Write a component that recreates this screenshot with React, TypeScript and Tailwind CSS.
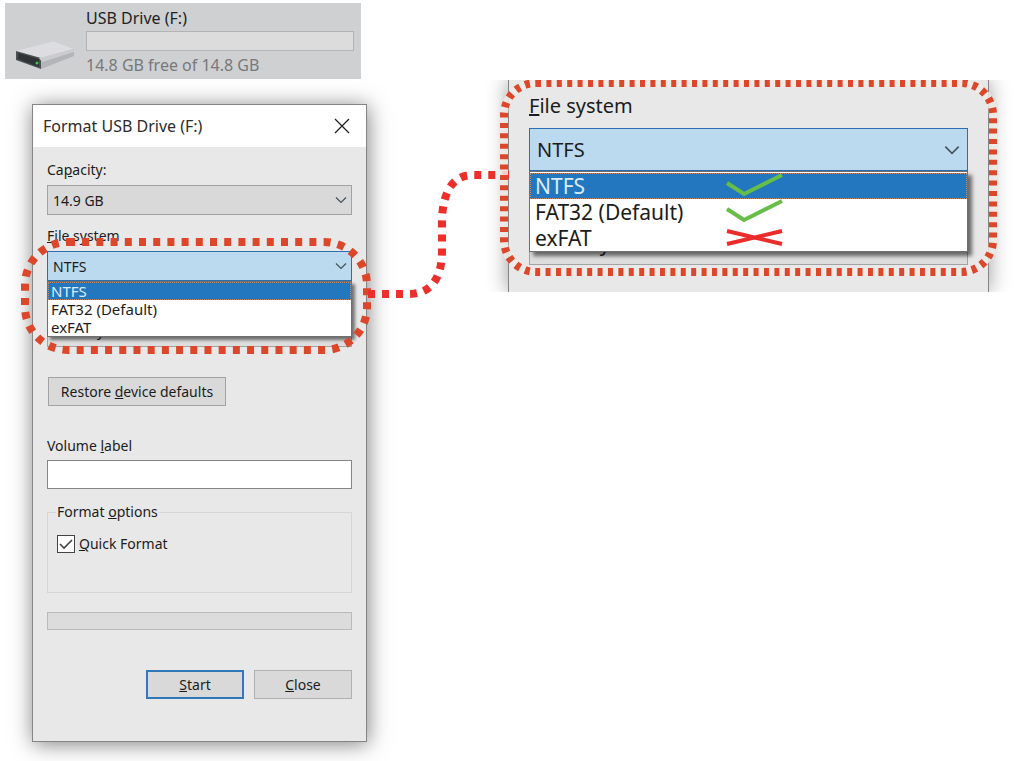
import type { ReactNode } from 'react';

const Chevron = ({ className }: { className: string }) => (
  <svg viewBox="0 0 12 7" fill="none" stroke="#44525c" strokeWidth="1.2" className={className} aria-hidden="true">
    <path d="M1 1 L6 6 L11 1" />
  </svg>
);

const SelectBox = ({ id, label, value, className, chevron }: { id: string; label: string; value: string; className: string; chevron: string }) => (
  <div className="relative">
    <select id={id} aria-label={label} className={`block w-full appearance-none rounded-none border outline-none ${className}`}>
      <option>{value}</option>
    </select>
    <Chevron className={`pointer-events-none absolute top-1/2 -translate-y-1/2 ${chevron}`} />
  </div>
);

// dashed outline drawn around a file system field
const DashedFrame = ({ className, radius, dash, backing }: { className: string; radius: number; dash: string; backing?: boolean }) => (
  <div className={`pointer-events-none absolute ${className}`}>
    <svg className="block h-full w-full overflow-visible" fill="none" strokeWidth="8" aria-hidden="true">
      {backing && <rect width="100%" height="100%" rx={radius} stroke="#efebe6" strokeOpacity="0.85" />}
      <rect width="100%" height="100%" rx={radius} stroke="#dc472b" strokeDasharray={dash} />
    </svg>
  </div>
);

const DriveIcon = () => (
  <svg viewBox="0 0 60 30" className="h-[30px] w-[60px]" aria-hidden="true">
    <path d="M1 10 L36 1 Q38 0 40 1 L59 8 L26 18 Z" fill="#dddde1" />
    <path d="M1 10 L26 17 V28 L1 19 Z" fill="#4a4f51" />
    <path d="M26 17 L59 8 V15 L26 28 Z" fill="#b4b5b9" />
    <path d="M24 17 L59 8 V11 L27 21 Z" fill="#cbcccf" />
    <path d="M3 12 L24 18 V26 L3 18 Z" fill="#2f3436" />
    <circle cx="22" cy="22" r="1.5" fill="#3fc552" />
  </svg>
);

const DriveCard = () => (
  <section className="mt-[3px] ml-[5px] flex h-[76px] w-[356px] items-end bg-[#cfd0d2] pr-[7px] pb-0.5">
    <div className="w-[81px] shrink-0 pb-1.5 pl-[10px]">
      <DriveIcon />
    </div>
    <div className="flex-1">
      <h2 className="text-[16px] leading-6 text-[#222]">USB Drive (F:)</h2>
      <div role="progressbar" aria-label="Used space" aria-valuenow={0} className="mt-px h-5 border border-[#b2b3b5] bg-[#dcdcdc]" />
      <p className="mt-0.5 text-[16px] leading-6 text-[#77797b]">14.8 GB free of 14.8 GB</p>
    </div>
  </section>
);

const Tick = () => (
  <svg viewBox="0 0 58 26" className="h-[26px] w-[58px] overflow-visible" fill="none" stroke="#66bd47" strokeWidth="4" aria-label="Supported">
    <path d="M1 10 L18 21 L56 2" />
  </svg>
);

const Cross = () => (
  <svg viewBox="0 0 58 26" className="h-[26px] w-[58px] overflow-visible" fill="none" stroke="#ec2b2b" strokeWidth="4" aria-label="Not supported">
    <path d="M1 6 L56 19 M1 19 L56 6" />
  </svg>
);

const systems: { name: string; mark: ReactNode }[] = [
  { name: 'NTFS', mark: <Tick /> },
  { name: 'FAT32 (Default)', mark: <Tick /> },
  { name: 'exFAT', mark: <Cross /> },
];

const FormatDialog = () => (
  <form className="mt-[25px] ml-8 w-[335px] border border-[#858585] bg-[#e8e8e8] pb-[42px] text-[14px] text-[#1c1c1c] shadow-[1px_2px_20px_rgba(0,0,0,0.5)]">
    <header className="flex h-[42px] items-center justify-between bg-white pr-4 pl-[10px]">
      <h1 className="text-[16px] text-[#2b2b2b]">Format USB Drive (F:)</h1>
      <button type="button" aria-label="Close window">
        <svg viewBox="0 0 16 16" className="h-4 w-4" fill="none" stroke="#222" strokeWidth="1.3">
          <path d="M1 1 L15 15 M15 1 L1 15" />
        </svg>
      </button>
    </header>

    <div className="px-[14px] pt-[13px]">
      <label htmlFor="capacity" className="block leading-5">Ca<u>p</u>acity:</label>
      <div className="mt-[5px]">
        <SelectBox id="capacity" label="Capacity" value="14.9 GB" className="h-[30px] border-[#a3a3a3] bg-[#d9d9d9] pl-[5px]" chevron="right-[5px] h-[7px] w-3" />
      </div>

      <label htmlFor="file-system" className="mt-[11px] block leading-5"><u>F</u>ile system</label>
      <div className="relative mt-[5px]">
        <SelectBox id="file-system" label="File system" value="NTFS" className="h-[30px] border-[#2c6fb0] bg-[#bbd9ef] pl-[5px]" chevron="right-[5px] h-[7px] w-3" />
        <ul role="listbox" aria-label="File system" className="absolute top-full right-0 left-0 z-10 border border-[#6f6f6f] bg-white text-[15px] shadow-[3px_3px_3px_rgba(0,0,0,0.5)]">
          {systems.map((s, i) => (
            <li key={s.name} role="option" aria-selected={i === 0} className="h-[18px] pl-[3px] leading-[18px] aria-selected:bg-[#2377be] aria-selected:text-[#dcebf8] aria-selected:outline-1 aria-selected:-outline-offset-1 aria-selected:outline-dotted aria-selected:outline-[#c08a6c]">{s.name}</li>
          ))}
        </ul>
        <DashedFrame className="-top-[9px] -right-[15px] -left-[22px] z-20 h-[108px]" radius={43} dash="7 7.2" />
        <div className="pointer-events-none absolute top-[43px] left-full z-30">
          <svg viewBox="0 0 141 119" className="-mt-[119px] ml-[16px] h-[119px] w-[141px] overflow-visible" fill="none" stroke="#ec2f2b" strokeWidth="8" strokeDasharray="7 7" aria-hidden="true">
            <path d="M0 119 H41 C63 119 74 103 74 76 V48 C74 20 83 0 105 0 H141" />
          </svg>
        </div>
      </div>

      <div className="mt-9">
        <SelectBox id="unit-size" label="Allocation unit size" value="4096 bytes" className="h-[30px] border-[#a3a3a3] bg-[#dedede] pb-1 pl-[5px]" chevron="right-[5px] h-[7px] w-3" />
      </div>

      <button type="button" className="mt-[30px] ml-px block h-[29px] w-[178px] border border-[#a3a3a3] bg-[#d9d9d9]">Restore <u>d</u>evice defaults</button>

      <label htmlFor="volume" className="mt-[30px] block leading-5">Volume <u>l</u>abel</label>
      <input id="volume" type="text" className="mt-[4px] block h-[29px] w-full border border-[#858585] bg-white px-1.5 outline-none" />

      <fieldset className="mt-[13px] h-[91px] border border-[#d6d6d6] px-2">
        <legend className="px-px leading-5">Format <u>o</u>ptions</legend>
        <label className="ml-px mt-3 flex items-center gap-1 leading-5">
          <span className="relative h-[18px] w-[18px]">
            <input type="checkbox" defaultChecked className="block h-[18px] w-[18px] appearance-none border border-[#444] bg-white" />
            <svg viewBox="0 0 18 18" className="pointer-events-none absolute top-0 left-0 h-[18px] w-[18px]" fill="none" stroke="#444" strokeWidth="1.6" aria-hidden="true">
              <path d="M3 9 L7 13 L15 5" />
            </svg>
          </span>
          <span><u>Q</u>uick Format</span>
        </label>
      </fieldset>

      <div role="progressbar" aria-label="Format progress" aria-valuenow={0} className="mt-[19px] h-[18px] border border-[#bababa] bg-[#dcdcdc]" />

      <div className="mt-10 flex justify-end gap-[10px]">
        <button type="submit" className="h-[29px] w-[98px] border-2 border-[#2f79bb] bg-[#d9d9d9]"><u>S</u>tart</button>
        <button type="button" className="h-[29px] w-[98px] border border-[#b0b0b0] bg-[#d9d9d9]"><u>C</u>lose</button>
      </div>
    </div>
  </form>
);

const FileSystemDetail = () => (
  <section className="mt-20 h-[212px] min-w-0 flex-1 overflow-hidden pr-[28px] pl-[22px]">
    <div className="relative h-full border-x border-[#858585] bg-[#e8e8e8] px-5 pt-[14px] text-[20px] text-[#1c1c1c] shadow-[0_0_20px_rgba(0,0,0,0.4)]">
      <label htmlFor="detail-system" className="block leading-6"><u>F</u>ile system</label>
      <div className="relative mt-[10px]">
        <SelectBox id="detail-system" label="File system" value="NTFS" className="h-[43px] border-[#2c6fb0] bg-[#bbd9ef] pl-[7px]" chevron="right-2 h-[10px] w-4" />
        <ul role="listbox" aria-label="Supported file systems" className="absolute top-full right-0 left-0 z-10 border border-[#6f6f6f] bg-white pt-px text-[21px] shadow-[4px_4px_4px_rgba(0,0,0,0.55)]">
          {systems.map((s, i) => (
            <li key={s.name} role="option" aria-selected={i === 0} className="grid h-[26px] grid-cols-[191px_auto] pl-[5px] leading-[26px] aria-selected:bg-[#2377be] aria-selected:text-[#dcebf8] aria-selected:outline-1 aria-selected:-outline-offset-1 aria-selected:outline-dotted aria-selected:outline-[#c08a6c]">
              <span>{s.name}</span>
              {s.mark}
            </li>
          ))}
        </ul>
      </div>
      <div className="mt-[51px]">
        <SelectBox id="detail-unit-size" label="Allocation unit size" value="4096 bytes" className="h-[43px] border-[#a3a3a3] bg-[#dedede] pl-[7px]" chevron="right-2 h-[10px] w-4" />
      </div>
      <DashedFrame className="top-[3px] -right-[5px] -left-[5px] z-20 h-[189px]" radius={32} dash="5 5.4" backing />
    </div>
  </section>
);

export default function App() {
  return (
    <main className="flex min-h-screen items-start bg-white font-['Noto_Sans','Open_Sans',sans-serif]">
      <div className="relative z-10 shrink-0">
        <DriveCard />
        <FormatDialog />
      </div>
      <div className="w-[119px] shrink-0" />
      <FileSystemDetail />
    </main>
  );
}
